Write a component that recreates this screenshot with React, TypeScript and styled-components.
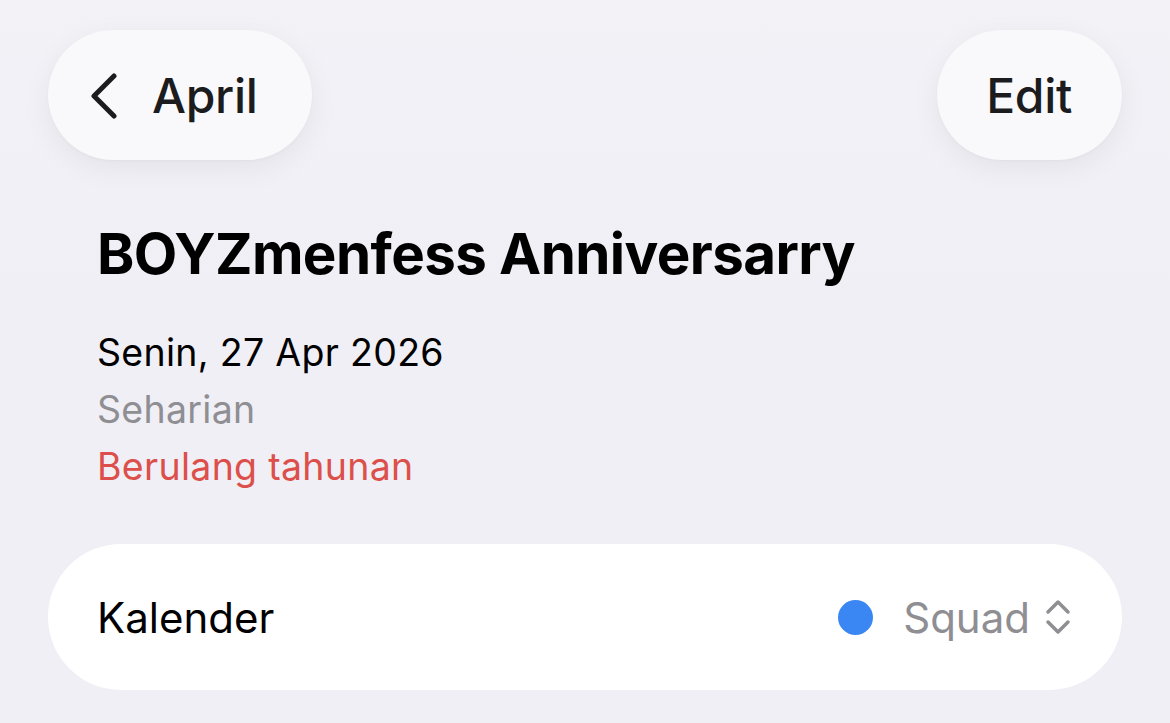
import { createGlobalStyle, styled } from 'styled-components';

const GlobalStyle = createGlobalStyle`
  html, body {
    margin: 0;
    padding: 0;
    background: #f0eff5;
  }
  body {
    font-family: Inter, "Noto Sans", sans-serif;
    -webkit-font-smoothing: antialiased;
  }
`;

const Page = styled.div`
  width: 1170px;
  height: 723px;
  box-sizing: border-box;
  padding: 30px 48px 0;
  display: flex;
  flex-direction: column;
  overflow: hidden;
  background: linear-gradient(#f3f2f7, #f0eff5 40%);
`;

const TopBar = styled.div`
  display: flex;
  justify-content: space-between;
  align-items: center;
`;

const PillButton = styled.button<{ $padLeft: number; $padRight: number }>`
  height: 130px;
  border-radius: 65px;
  border: none;
  background: #f9f9fc;
  box-shadow: 0 8px 30px rgba(0, 0, 0, 0.06), 0 1px 3px rgba(0, 0, 0, 0.03);
  padding: 0 ${(p) => p.$padRight}px 0 ${(p) => p.$padLeft}px;
  display: flex;
  align-items: center;
  gap: 32px;
  font-family: inherit;
  font-size: 48px;
  font-weight: 500;
  color: #1c1c1e;
  letter-spacing: -0.3px;
`;

const Details = styled.div`
  padding: 60px 49px 0;
  display: flex;
  flex-direction: column;
`;

const Title = styled.h1`
  margin: 0 0 36px;
  font-size: 56.5px;
  font-weight: 700;
  color: #000;
  letter-spacing: -0.6px;
  line-height: 68px;
`;

const InfoLine = styled.div<{ $tone: 'main' | 'muted' | 'alert' }>`
  font-size: 37.5px;
  line-height: 57px;
  letter-spacing: 0.3px;
  color: ${(p) => (p.$tone === 'main' ? '#000' : p.$tone === 'muted' ? '#8e8e93' : '#dc4f4b')};
`;

const Card = styled.div`
  margin-top: 49px;
  height: 146px;
  border-radius: 73px;
  background: #fff;
  display: flex;
  align-items: center;
  justify-content: space-between;
  padding: 0 50px 0 49px;
`;

const Label = styled.span`
  font-size: 42px;
  color: #000;
`;

const Value = styled.div`
  display: flex;
  align-items: center;
  font-size: 42px;
  color: #8e8e93;
`;

const Dot = styled.span`
  width: 35px;
  height: 35px;
  border-radius: 50%;
  background: #3a87f3;
  margin-right: 30px;
`;

const Chevron = () => (
  <svg width="32" height="48" viewBox="0 0 32 48">
    <path d="M26 5 L6 25 L26 45" fill="none" stroke="#1c1c1e" strokeWidth="5" strokeLinecap="round" strokeLinejoin="round" />
  </svg>
);

const UpDown = () => (
  <svg width="28" height="40" viewBox="0 0 28 40" style={{ marginLeft: 14 }}>
    <path d="M4 15 L14 5 L24 15 M4 25 L14 35 L24 25" fill="none" stroke="#8e8e93" strokeWidth="3.5" strokeLinecap="round" strokeLinejoin="round" />
  </svg>
);

const App = () => (
  <Page>
    <GlobalStyle />
    <TopBar>
      <PillButton $padLeft={40} $padRight={54}>
        <Chevron />
        April
      </PillButton>
      <PillButton $padLeft={49} $padRight={50}>Edit</PillButton>
    </TopBar>
    <Details>
      <Title>BOYZmenfess Anniversarry</Title>
      <InfoLine $tone="main">Senin, 27 Apr 2026</InfoLine>
      <InfoLine $tone="muted">Seharian</InfoLine>
      <InfoLine $tone="alert">Berulang tahunan</InfoLine>
    </Details>
    <Card>
      <Label>Kalender</Label>
      <Value>
        <Dot />
        Squad
        <UpDown />
      </Value>
    </Card>
  </Page>
);

export default App;
